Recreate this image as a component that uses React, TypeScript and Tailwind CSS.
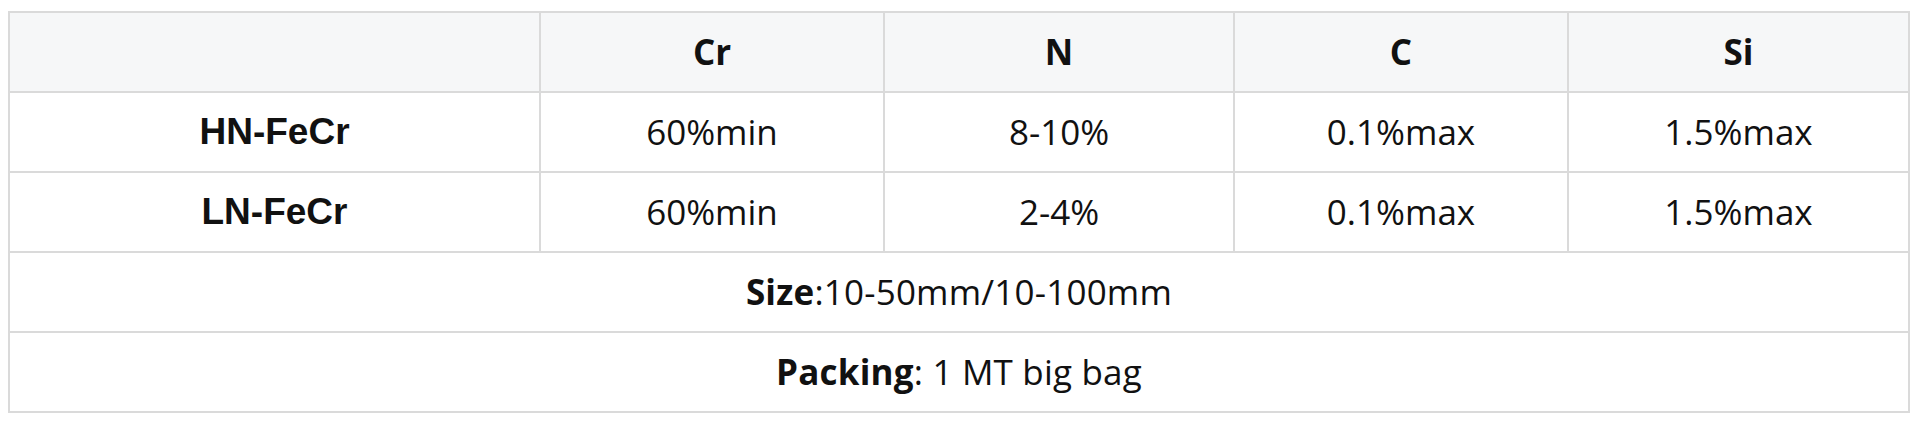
const rows = [
  { name: "HN-FeCr", cr: "60%min", n: "8-10%", c: "0.1%max", si: "1.5%max" },
  { name: "LN-FeCr", cr: "60%min", n: "2-4%", c: "0.1%max", si: "1.5%max" },
];

const cell = "border-2 border-[#dadada] text-center align-middle h-[80px] p-0";

export default function App() {
  return (
    <div className="bg-white w-[1920px] h-[424px] pl-[8px] pr-[10px] pt-[11px] font-['Open_Sans',sans-serif] text-[#111111] text-[35px]">
      <table className="w-full border-collapse table-fixed">
        <colgroup>
          <col className="w-[531px]" />
          <col className="w-[344px]" />
          <col className="w-[350px]" />
          <col className="w-[334px]" />
          <col />
        </colgroup>
        <thead className="bg-[#f6f7f8]">
          <tr>
            <th className={cell}></th>
            <th className={`${cell} font-bold`}>Cr</th>
            <th className={`${cell} font-bold`}>N</th>
            <th className={`${cell} font-bold`}>C</th>
            <th className={`${cell} font-bold`}>Si</th>
          </tr>
        </thead>
        <tbody>
          {rows.map((r) => (
            <tr key={r.name}>
              <td className={`${cell} font-bold font-['Liberation_Sans',sans-serif] text-[37px]`}>{r.name}</td>
              <td className={cell}>{r.cr}</td>
              <td className={cell}>{r.n}</td>
              <td className={cell}>{r.c}</td>
              <td className={cell}>{r.si}</td>
            </tr>
          ))}
          <tr>
            <td colSpan={5} className={`${cell} tracking-[0.2px]`}>
              <span className="font-bold">Size</span>:10-50mm/10-100mm
            </td>
          </tr>
          <tr>
            <td colSpan={5} className={`${cell} tracking-[0.2px]`}>
              <span className="font-bold">Packing</span>: 1 MT big bag
            </td>
          </tr>
        </tbody>
      </table>
    </div>
  );
}
